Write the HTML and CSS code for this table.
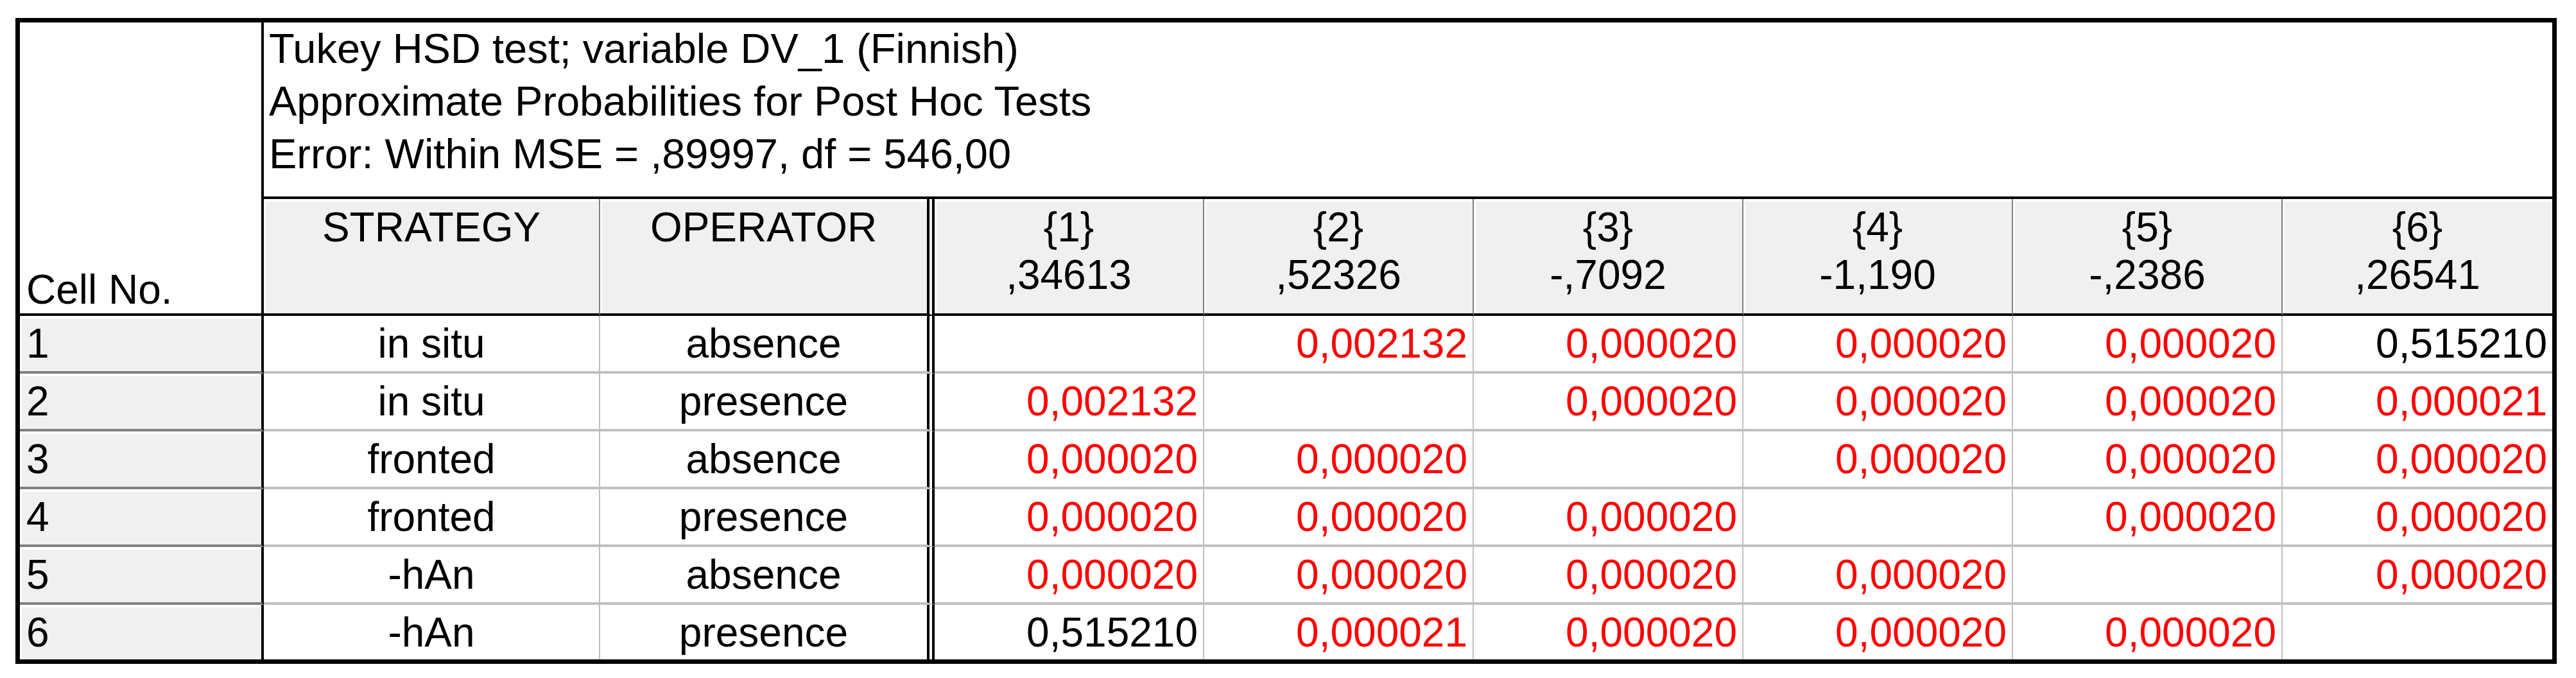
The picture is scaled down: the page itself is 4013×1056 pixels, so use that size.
FILE: index.html
```html
<!DOCTYPE html>
<html>
<head>
<meta charset="utf-8">
<title>Tukey HSD test</title>
<link rel="stylesheet" href="styles.css">
</head>
<body>
<div class="sheet">
  <div class="cell cellno">Cell No.</div>
  <div class="cell title">
    <div>Tukey HSD test; variable DV_1 (Finnish)</div>
    <div>Approximate Probabilities for Post Hoc Tests</div>
    <div>Error: Within MSE = ,89997, df = 546,00</div>
  </div>
  <div class="cell hd hg">STRATEGY</div>
  <div class="cell hd hop">OPERATOR</div>
  <div class="cell hd hg">{1}<br>,34613</div>
  <div class="cell hd hg">{2}<br>,52326</div>
  <div class="cell hd hg">{3}<br>-,7092</div>
  <div class="cell hd hg">{4}<br>-1,190</div>
  <div class="cell hd hg">{5}<br>-,2386</div>
  <div class="cell hd hlast">{6}<br>,26541</div>

  <div class="cell rn">1</div>
  <div class="cell tx sep">in situ</div>
  <div class="cell tx op">absence</div>
  <div class="cell nm sep"></div>
  <div class="cell nm sep red">0,002132</div>
  <div class="cell nm sep red">0,000020</div>
  <div class="cell nm sep red">0,000020</div>
  <div class="cell nm sep red">0,000020</div>
  <div class="cell nm">0,515210</div>

  <div class="cell rn">2</div>
  <div class="cell tx sep">in situ</div>
  <div class="cell tx op">presence</div>
  <div class="cell nm sep red">0,002132</div>
  <div class="cell nm sep"></div>
  <div class="cell nm sep red">0,000020</div>
  <div class="cell nm sep red">0,000020</div>
  <div class="cell nm sep red">0,000020</div>
  <div class="cell nm red">0,000021</div>

  <div class="cell rn">3</div>
  <div class="cell tx sep">fronted</div>
  <div class="cell tx op">absence</div>
  <div class="cell nm sep red">0,000020</div>
  <div class="cell nm sep red">0,000020</div>
  <div class="cell nm sep"></div>
  <div class="cell nm sep red">0,000020</div>
  <div class="cell nm sep red">0,000020</div>
  <div class="cell nm red">0,000020</div>

  <div class="cell rn">4</div>
  <div class="cell tx sep">fronted</div>
  <div class="cell tx op">presence</div>
  <div class="cell nm sep red">0,000020</div>
  <div class="cell nm sep red">0,000020</div>
  <div class="cell nm sep red">0,000020</div>
  <div class="cell nm sep"></div>
  <div class="cell nm sep red">0,000020</div>
  <div class="cell nm red">0,000020</div>

  <div class="cell rn">5</div>
  <div class="cell tx sep">-hAn</div>
  <div class="cell tx op">absence</div>
  <div class="cell nm sep red">0,000020</div>
  <div class="cell nm sep red">0,000020</div>
  <div class="cell nm sep red">0,000020</div>
  <div class="cell nm sep red">0,000020</div>
  <div class="cell nm sep"></div>
  <div class="cell nm red">0,000020</div>

  <div class="cell rn last">6</div>
  <div class="cell tx sep last">-hAn</div>
  <div class="cell tx op last">presence</div>
  <div class="cell nm sep last">0,515210</div>
  <div class="cell nm sep red last">0,000021</div>
  <div class="cell nm sep red last">0,000020</div>
  <div class="cell nm sep red last">0,000020</div>
  <div class="cell nm sep red last">0,000020</div>
  <div class="cell nm last"></div>
</div>
</body>
</html>
```

FILE: styles.css
```css
* {
  box-sizing: border-box;
}

html,
body {
  margin: 0;
  background: #ffffff;
}

body {
  padding: 28px 0 0 24px;
  font-family: "Liberation Sans", Arial, sans-serif;
  font-size: 64px;
  color: #000000;
}

.sheet {
  display: grid;
  width: max-content;
  grid-template-columns: 380px 524px 521px repeat(6, 420px);
  grid-template-rows: 275px 182px repeat(5, 90px) 85px;
  border: 7px solid #000000;
  background: #ffffff;
}

.cell {
  display: flex;
  line-height: normal;
  white-space: nowrap;
}

.cellno {
  grid-row: span 2;
  align-items: flex-end;
  padding-left: 10px;
  border-right: 4px solid #000000;
  border-bottom: 4px solid #000000;
}

.title {
  grid-column: span 8;
  flex-direction: column;
  padding: 0 0 0 8px;
  font-size: 65px;
  line-height: 82px;
  border-bottom: 4px solid #000000;
}

.hd {
  display: block;
  text-align: center;
  padding-top: 7px;
  background: #f0f0f0;
  box-shadow: inset 3px 4px 0 #ffffff;
  border-bottom: 4px solid #000000;
}

.hg {
  border-right: 2px solid #808080;
}

.hop {
  border-right: 12px double #000000;
}

.rn {
  align-items: center;
  padding-left: 10px;
  background: #f0f0f0;
  box-shadow: inset 3px 4px 0 #ffffff;
  border-right: 4px solid #000000;
  border-bottom: 4px solid #808080;
}

.tx {
  align-items: center;
  justify-content: center;
  border-bottom: 4px solid #c0c0c0;
}

.nm {
  align-items: center;
  justify-content: flex-end;
  padding-right: 8px;
  border-bottom: 4px solid #c0c0c0;
}

.sep {
  border-right: 2px solid #c0c0c0;
}

.op {
  border-right: 12px double #000000;
}

.red {
  color: #ff0000;
}

.last {
  border-bottom: none;
}
```
